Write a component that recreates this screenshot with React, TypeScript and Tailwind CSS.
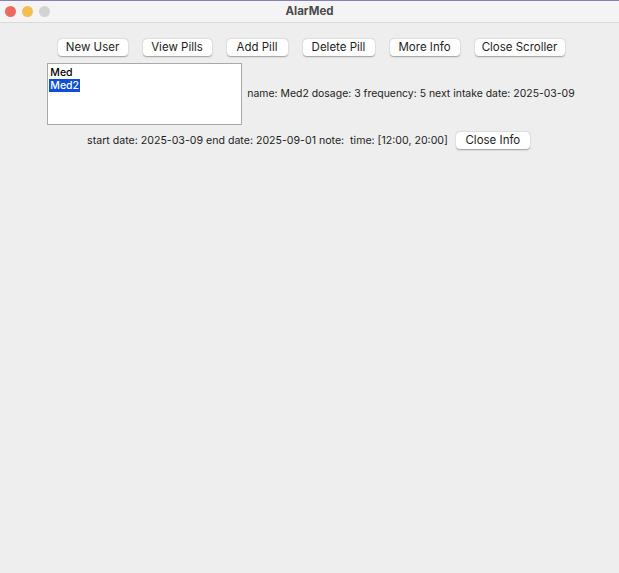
import React from "react";

const font = { fontFamily: '"Inter", "Liberation Sans", sans-serif' };

function Btn({ label, w }: { label: string; w: string }) {
  return (
    <div
      className={`flex h-[17px] items-center justify-center rounded-[4px] bg-white text-[11.5px] text-[#1d1d1d] shadow-[0_0.5px_1.5px_rgba(0,0,0,0.35)] ${w}`}
    >
      {label}
    </div>
  );
}

export default function App() {
  return (
    <div className="flex h-[573px] w-[619px] flex-col bg-[#eeeeee]" style={font}>
      <div className="h-[1px] bg-[#8a80b4]" />
      <div className="relative flex h-[22px] items-center justify-center border-b border-[#d9d9d9] bg-[#f4f4f4]">
        <div className="absolute left-[5px] top-[5px] flex gap-[6px]">
          <div className="h-[11px] w-[11px] rounded-full bg-[#ec6a5e]" />
          <div className="h-[11px] w-[11px] rounded-full bg-[#f4bf4f]" />
          <div className="h-[11px] w-[11px] rounded-full bg-[#d3d3d3]" />
        </div>
        <span className="text-[11.5px] font-bold text-[#4b4b4b]">AlarMed</span>
      </div>

      <div className="mt-[16px] flex justify-center gap-[15px] pl-[3px]">
        <Btn label="New User" w="w-[70px]" />
        <Btn label="View Pills" w="w-[69px]" />
        <Btn label="Add Pill" w="w-[61px]" />
        <Btn label="Delete Pill" w="w-[72px]" />
        <Btn label="More Info" w="w-[70px]" />
        <Btn label="Close Scroller" w="w-[90px]" />
      </div>

      <div className="mt-[7px] flex items-center justify-center gap-[5px] pl-[3px]">
        <div className="flex h-[62px] w-[195px] flex-col border border-[#a9a9a9] bg-white pl-[1px] pt-[2px] text-[10.5px] font-medium leading-[13px] text-black">
          <span className="px-[1px]">Med</span>
          <span className="self-start bg-[#0e4fd6] px-[1px] text-white">Med2</span>
        </div>
        <span className="text-[10.45px] text-[#1d1d1d]">
          name: Med2 dosage: 3 frequency: 5 next intake date: 2025-03-09
        </span>
      </div>

      <div className="mt-[7px] flex items-center justify-center gap-[8px] pr-[2px]">
        <span className="text-[10.6px] text-[#1d1d1d]">
          start date: 2025-03-09 end date: 2025-09-01 note:&nbsp; time: [12:00, 20:00]
        </span>
        <Btn label="Close Info" w="w-[74px]" />
      </div>
    </div>
  );
}
